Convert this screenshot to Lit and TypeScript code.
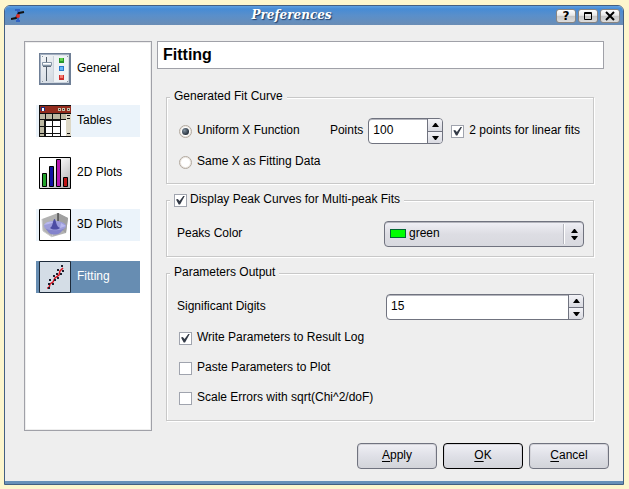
import { LitElement, html, css, svg } from "lit";
import { customElement, property, state } from "lit/decorators.js";

const drawings: Record<string, unknown> = {
  general: svg`
    <defs>
      <linearGradient id="metal" x1="0" y1="0" x2="1" y2="1">
        <stop offset="0" stop-color="#f4f6f8"/><stop offset="1" stop-color="#c3cdd8"/>
      </linearGradient>
    </defs>
    <path fill="#6f7f96" d="M0 0h32v32H0z"/>
    <path fill="#a0adbe" d="M1 1h29v29H1z"/>
    <path fill="url(#metal)" d="M2 2h28v28H2z"/>
    <path fill="#eef2f5" d="M15 3h14v26H15z"/>
    <path stroke="#ccd3da" d="M14.500 3v26"/>
    <path stroke="#8b95a0" d="M3 3.500h1M28 3.500h1M3 28.500h1M28 28.500h1"/>
    <path fill="#4e5b69" d="M7 4h1v24H7z"/>
    <path fill="#d7dfe7" stroke="#8595a5" d="M3.500 9.500h9v3h-9z"/>
    <path stroke="#fff" d="M4 10.500h8"/>
    <path stroke="#5d6c7c" d="M4 13.500h8"/>
    <path fill="#27962a" d="M20 5h5v5h-5z"/><path fill="#5fd34b" d="M21 5h3v3h-3z"/>
    <path fill="#2679c9" d="M20 13h5v5h-5z"/><path fill="#64b6f5" d="M21 14h3v3h-3z"/>
    <path fill="#cc2e2e" d="M20 22h5v5h-5z"/><path fill="#f57b70" d="M21 22h3v3h-3z"/>`,
  tables: svg`
    <path fill="#111" d="M0 0h32v32H0z"/>
    <path fill="#932c1d" d="M1 1h31v7H1z"/>
    <path fill="#1b2e82" d="M2 2h4v4H2z"/><path fill="#fff" d="M3 3h2v3H3z"/>
    <path fill="#c4bfa8" d="M19 3h3v3h-3zM23 3h3v3h-3zM28 3h3v3h-3z"/>
    <path stroke="#222" d="M20 4.500h1M24.500 4v1M29 4l1 1"/>
    <path fill="#bdb9a2" d="M1 9h5v5H1zM7 9h6v5H7zM14 9h7v5h-7zM22 9h5v5h-5zM1 15h4v6H1zM1 22h4v6H1zM1 29h4v2H1z"/>
    <path fill="#fff" d="M7 16h6v5H7zM14 16h7v5h-7zM22 15h5v16h-5zM7 22h6v6H7zM14 22h7v6h-7zM7 29h6v2H7zM14 29h7v2h-7z"/>
    <path fill="#ddd8c6" d="M27 9h5v22h-5z"/>
    <path stroke="#111" d="M28 10.500h3M28 13.500h3M28 28.500h3"/>`,
  bars: svg`
    <defs>
      <linearGradient id="shade" x1="0" y1="0" x2="1" y2="1">
        <stop offset=".3" stop-color="#fff"/><stop offset="1" stop-color="#aaa"/>
      </linearGradient>
    </defs>
    <path fill="url(#shade)" stroke="#000" d="M.5.5h31v31H.5z"/>
    <path fill="#22a32b" stroke="#000" d="M3.500 16.500h4v13h-4z"/>
    <path fill="#1111a0" stroke="#000" d="M10.500 9.500h4v20h-4z"/>
    <path fill="#b616b0" stroke="#000" d="M17.500 2.500h4v27h-4z"/>
    <path fill="#bd1515" stroke="#000" d="M24.500 20.500h4v9h-4z"/>`,
  surface: svg`
    <path fill="#fff" stroke="#000" d="M.5.5h31v31H.5z"/>
    <path fill="#b2b2b2" d="M3 10l16-6 10 5-2 15-14 4L4 22z"/>
    <path fill="#a0a0a0" d="M19 4l10 5-2 15-8-6z"/>
    <path stroke="#222" fill="none" d="M19 4v8"/>
    <path stroke="#ccc" fill="none" d="M3 10l1 12 9 6 1-4"/>
    <ellipse cx="16" cy="17" rx="11" ry="5" fill="#9c9cda"/>
    <path fill="#8484cc" d="M6 19c3 3 17 3 20 0l-5 5c-3 2-8 2-11 0z"/>
    <path fill="#b9b9ee" d="M5 16c2-4 8-4 10-3-4 2-7 2-10 3zM22 14l5 3-6 2z"/>
    <path fill="#4c4ca3" d="M11 19c3-1 3-9 4.500-9S17 18 21 19c-3 2-7 2-10 0z"/>`,
  fitting: svg`
    <path fill="#d4dde6" stroke="#1d2b3b" d="M.5.5h31v31H.5z"/>
    <path stroke="#d9141f" stroke-width="1.500" fill="none" d="M8 27h2l1-4 3-2 2-4 4-3 1-4 3-3"/>
    <path fill="#1d2030" d="M22 4h2v2h-2zM18 8h2v2h-2zM23 9h2v2h-2zM17 12h2v2h-2zM21 12h2v2h-2zM14 14h2v2h-2zM18 16h2v2h-2zM10 18h2v2h-2zM15 18h2v2h-2zM9 22h2v2H9zM13 22h2v2h-2zM9 26h2v2H9z"/>`,
};

const pages = [
  { name: "General", icon: "general" },
  { name: "Tables", icon: "tables" },
  { name: "2D Plots", icon: "bars" },
  { name: "3D Plots", icon: "surface" },
  { name: "Fitting", icon: "fitting" },
];

@customElement("spin-box")
class SpinBox extends LitElement {
  @property({ type: Number }) value = 0;
  @property() label = "";

  static styles = css`
    :host { display: flex; height: 26px; }
    .box {
      display: flex; flex: 1; min-width: 0; box-sizing: border-box; overflow: hidden;
      border: 1px solid #70737f; border-radius: 4px; background: #fff;
      box-shadow: inset 0 1px #b4b5bd;
    }
    .field {
      flex: 1; min-width: 0; border: 0; outline: 0; margin: 0; padding: 0 4px 2px;
      background: transparent; color: #000; font: 12px "Liberation Sans", sans-serif;
      appearance: textfield;
    }
    .field::-webkit-inner-spin-button { appearance: none; margin: 0; }
    .steps { display: grid; grid-template-rows: 1fr 1fr; width: 14px; border-left: 1px solid #70737f; }
    .step {
      display: grid; place-items: center; margin: 0; padding: 0; border: 0; min-height: 0;
      background: linear-gradient(#f3f3f7, #d9dae1);
    }
    .step + .step { border-top: 1px solid #70737f; }
    .arrow { display: block; width: 7px; height: 4px; }
  `;

  private step(by: number) {
    this.value += by;
  }

  render() {
    return html`<div class="box">
      <input class="field" type="number" aria-label=${this.label} .value=${String(this.value)}
        @change=${(e: Event) => (this.value = Number((e.target as HTMLInputElement).value))} />
      <div class="steps">
        <button class="step" type="button" aria-label="Increase" @click=${() => this.step(1)}>
          <svg class="arrow" viewBox="0 0 7 4"><path d="M0 4h7L4 0H3z" /></svg>
        </button>
        <button class="step" type="button" aria-label="Decrease" @click=${() => this.step(-1)}>
          <svg class="arrow" viewBox="0 0 7 4"><path d="M0 0h7L4 4H3z" /></svg>
        </button>
      </div>
    </div>`;
  }
}

@customElement("app-root")
class AppRoot extends LitElement {
  @state() private page = "Fitting";

  static styles = css`
    :host {
      display: flex; box-sizing: border-box; min-height: 100vh; padding: 5px 5px 4px 4px;
      background: #fdf6cd; color: #000; font: 12px/20px "Liberation Sans", Arial, sans-serif;
    }
    .window {
      flex: 1; min-width: 0; display: flex; flex-direction: column;
      border: 1px solid #435f82; border-radius: 6px 6px 0 0; background: #eee; overflow: hidden;
      box-shadow: inset 0 -3px #6890b8;
    }
    .titlebar {
      display: flex; align-items: center; height: 19px; padding: 0 3px 0 6px;
      background: linear-gradient(#5fa0e2, #478cd5 15%, #5a8fca 50%, #6a8db5);
    }
    .logo { width: 14px; height: 14px; }
    .title {
      flex: 1; margin: 0; text-align: center; color: #fff; text-shadow: 1px 1px 1px #1f3c64;
      font: italic bold 12px/16px "DejaVu Serif", serif; padding: 0 0 2px 2px;
    }
    .controls { display: flex; gap: 2px; }
    .control {
      display: grid; place-items: center; box-sizing: border-box; width: 20px; height: 14px;
      padding: 0; border: 1px solid #8a8580; border-radius: 3px; color: #000;
      background: linear-gradient(#fff, #e8e8e8 45%, #c6c6c6 50%, #ddd);
      font: bold 12px/12px "DejaVu Sans", sans-serif;
    }
    .glyph { display: block; width: 10px; height: 10px; }
    .body { flex: 1; display: grid; grid-template-columns: 128px 1fr; gap: 5px; padding: 16px 19px 12px; }
    .pages {
      display: flex; flex-direction: column; gap: 20px; padding: 11px;
      border: 1px solid #a0a1a8; background: #fff; box-shadow: inset 0 0 0 1px #eee;
    }
    .page {
      display: flex; align-items: center; gap: 6px; height: 32px; padding: 0 0 0 3px;
      border: 0; background: transparent; color: #000; font: inherit; text-align: left;
    }
    .page:nth-child(even) { background: #ebf3fa; }
    .page[aria-current="page"] { background: #678db2; color: #fff; }
    .icon { flex: none; width: 32px; height: 32px; }
    .text { padding-bottom: 2px; line-height: 18px; white-space: nowrap; }
    .pane { display: flex; flex-direction: column; min-width: 0; }
    .heading {
      margin: 0 0 20px; padding: 0 5px; border: 1px solid #a0a1a8; background: #fff;
      font: bold 16px/26px "Liberation Sans", Arial, sans-serif;
    }
    .group {
      display: flex; flex-direction: column; gap: 8px; min-width: 0; margin: 0 10px 8px 9px;
      padding: 13px 9px 11px 10px; border: 1px solid #c8c8c8;
      box-shadow: 1px 1px #fff, inset 1px 1px #fff;
    }
    .group.compact { padding-bottom: 9px; }
    .group.last { flex: 1; margin-bottom: 10px; }
    .legend { display: flex; align-items: center; height: 16px; margin-left: -7px; padding: 0 4px; background: #eee; }
    .row { display: flex; align-items: center; justify-content: space-between; }
    .checks { display: flex; flex-direction: column; align-items: flex-start; gap: 10px; }
    .option { display: flex; align-items: center; gap: 5px; }
    .legend .option { gap: 3px; }
    .indent { padding-left: 2px; }
    .points { display: flex; align-items: center; gap: 5px; margin-right: 4px; }
    .narrow { width: 75px; margin-right: 3px; }
    .wide { width: 198px; }
    .check, .radio {
      appearance: none; display: grid; place-items: center; flex: none; box-sizing: border-box;
      width: 13px; height: 13px; margin: 0; border: 1px solid #a0a4ae; background: #fff;
    }
    .check:checked::before {
      content: ""; width: 9px; height: 9px; background: #343b47;
      clip-path: polygon(0 45%, 20% 38%, 40% 62%, 85% 0, 100% 0, 45% 100%, 30% 100%);
    }
    .radio { border-color: #b1a89e; border-radius: 50%; box-shadow: inset 0 0 0 1px #ece7e1; }
    .radio:checked::before {
      content: ""; width: 7px; height: 7px; border-radius: 50%;
      background: radial-gradient(circle at 35% 35%, #8292a0, #26313d 70%);
    }
    .picker { position: relative; width: 200px; }
    .select {
      appearance: none; display: block; box-sizing: border-box; width: 100%; height: 26px; margin: 0;
      padding: 0 24px 2px 24px; border: 1px solid #70737f; border-radius: 4px; color: #000;
      background: linear-gradient(#f0f0f6, #dddde3 50%, #d8d9df);
      font: 12px "Liberation Sans", Arial, sans-serif;
      box-shadow: inset 0 1px #b4b5bd;
    }
    .swatch {
      position: absolute; left: 6px; top: 8px; box-sizing: border-box; width: 16px; height: 9px;
      border: 1px solid #063; background: #0f0; pointer-events: none;
    }
    .chevrons {
      position: absolute; right: 2px; top: 3px; width: 19px; height: 20px; pointer-events: none;
    }
    .footer { display: flex; justify-content: flex-end; gap: 6px; padding: 0 14px 15px; }
    .push {
      width: 80px; height: 26px; padding: 0 0 2px; border: 1px solid #70737f; border-radius: 4px; color: #000;
      background: linear-gradient(#f0f0f5, #dfe0e7 50%, #d2d4d9); font: inherit; line-height: 20px;
      box-shadow: inset 0 0 0 1px #d4d4da;
    }
    .push.default { border-color: #000; }
    .key { text-decoration: underline; text-underline-offset: 2px; text-decoration-thickness: 1px; text-decoration-skip-ink: none; }
  `;

  render() {
    return html`<div class="window">
      <header class="titlebar">
        <svg class="logo" viewBox="0 0 14 14" fill="none">
          <path stroke="#3163c4" stroke-width="2" d="M7 0v13M4 1h5M5 12h4" />
          <path stroke="#111" stroke-width="2" d="M0 10l5-1 3-5 5-1" />
          <circle cx="7" cy="7" r="2" fill="#dc342f" />
        </svg>
        <h1 class="title">Preferences</h1>
        <div class="controls">
          <button class="control" aria-label="Help">?</button>
          <button class="control" aria-label="Maximize">
            <svg class="glyph" viewBox="0 0 10 10" fill="none" stroke="#000">
              <path d="M1.500 1.500h7v7h-7zM1 2.500h8" />
            </svg>
          </button>
          <button class="control" aria-label="Close">
            <svg class="glyph" viewBox="0 0 10 10" stroke="#000" stroke-width="2"><path d="M1 1l8 8M9 1l-8 8" /></svg>
          </button>
        </div>
      </header>
      <main class="body">
        <nav class="pages" aria-label="Categories">
          ${pages.map(
            (p) => html`<button class="page" aria-current=${p.name === this.page ? "page" : "false"}
              @click=${() => (this.page = p.name)}>
              <svg class="icon" viewBox="0 0 32 32">${drawings[p.icon]}</svg>
              <span class="text">${p.name}</span>
            </button>`
          )}
        </nav>
        <section class="pane">
          <h2 class="heading">${this.page}</h2>
          <fieldset class="group">
            <legend class="legend"><span class="text">Generated Fit Curve</span></legend>
            <div class="row">
              <label class="option indent"><input class="radio" type="radio" name="curve" checked /><span class="text">Uniform X Function</span></label>
              <div class="points">
                <span class="text">Points</span>
                <spin-box class="narrow" label="Points" value="100"></spin-box>
                <label class="option"><input class="check" type="checkbox" checked /><span class="text">2 points for linear fits</span></label>
              </div>
            </div>
            <label class="option indent"><input class="radio" type="radio" name="curve" /><span class="text">Same X as Fitting Data</span></label>
          </fieldset>
          <fieldset class="group compact">
            <legend class="legend">
              <label class="option"><input class="check" type="checkbox" checked /><span class="text">Display Peak Curves for Multi-peak Fits</span></label>
            </legend>
            <div class="row">
              <label class="text" for="color">Peaks Color</label>
              <div class="picker">
                <select class="select" id="color"><option>green</option><option>red</option><option>blue</option></select>
                <span class="swatch"></span>
                <svg class="chevrons" viewBox="0 0 19 20">
                  <path stroke="#b5b6be" d="M.5 0v20" /><path stroke="#fff" d="M1.500 0v20" />
                  <path d="M8 9h7l-3-4h-1zM8 12h7l-3 4h-1z" />
                </svg>
              </div>
            </div>
          </fieldset>
          <fieldset class="group last">
            <legend class="legend"><span class="text">Parameters Output</span></legend>
            <div class="row">
              <span class="text">Significant Digits</span>
              <spin-box class="wide" label="Significant Digits" value="15"></spin-box>
            </div>
            <div class="checks">
              <label class="option indent"><input class="check" type="checkbox" checked /><span class="text">Write Parameters to Result Log</span></label>
              <label class="option indent"><input class="check" type="checkbox" /><span class="text">Paste Parameters to Plot</span></label>
              <label class="option indent"><input class="check" type="checkbox" /><span class="text">Scale Errors with sqrt(Chi^2/doF)</span></label>
            </div>
          </fieldset>
        </section>
      </main>
      <footer class="footer">
        <button class="push"><span class="key">A</span>pply</button>
        <button class="push default"><span class="key">O</span>K</button>
        <button class="push"><span class="key">C</span>ancel</button>
      </footer>
    </div>`;
  }
}
